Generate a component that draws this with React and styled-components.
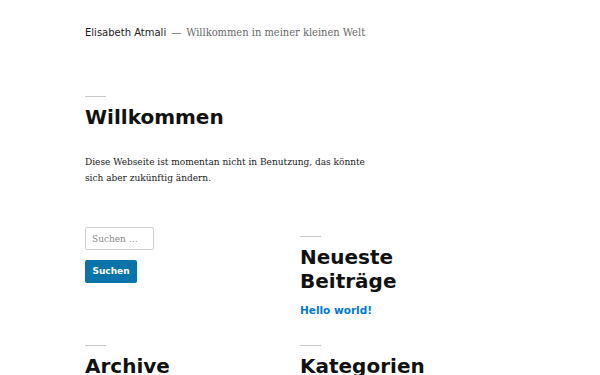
import React from "react";
import styled, { createGlobalStyle } from "styled-components";

const Global = createGlobalStyle`
  html, body { margin: 0; padding: 0; background: #fff; }
  body { font-family: "DejaVu Serif Condensed", "DejaVu Serif", serif; color: #1a1a1a; }
`;

const Page = styled.div`
  padding: 26px 0 0 85px;
  width: 600px;
  height: 375px;
  box-sizing: border-box;
  overflow: hidden;
`;

const Header = styled.header`
  display: flex;
  align-items: baseline;
  gap: 5px;
  height: 16px;
`;

const SiteTitle = styled.span`
  font-family: "DejaVu Sans", sans-serif;
  font-size: 10px;
  color: #1a1a1a;
`;

const Dash = styled.span`
  font-family: "DejaVu Sans", sans-serif;
  font-size: 10px;
  color: #686868;
`;

const Tagline = styled.span`
  font-size: 11px;
  color: #686868;
`;

const Rule = styled.div`
  width: 21px;
  height: 1px;
  background: #c8c8c8;
`;

const Article = styled.article`
  margin-top: 54px;
  width: 300px;
`;

const Title = styled.h1`
  font-family: "DejaVu Sans", sans-serif;
  font-weight: bold;
  font-size: 20px;
  line-height: 24px;
  margin: 8px 0 0;
  color: #111;
`;

const Text = styled.p`
  font-size: 10px;
  line-height: 16px;
  margin: 24.5px 0 0;
`;

const Widgets = styled.div`
  display: grid;
  grid-template-columns: 215px 215px;
  row-gap: 29px;
  margin-top: 41px;
`;

const Widget = styled.section`
  display: flex;
  flex-direction: column;
  align-items: flex-start;
  padding-top: ${(p) => (p.$offset ? `${p.$offset}px` : "0")};
`;

const WidgetTitle = styled.h2`
  font-family: "DejaVu Sans", sans-serif;
  font-weight: bold;
  font-size: 20px;
  line-height: 24px;
  margin: 8px 0 0;
  color: #111;
`;

const SearchInput = styled.input`
  width: 69px;
  height: 23px;
  box-sizing: border-box;
  border: 1px solid #d1d1d1;
  border-radius: 2px;
  padding: 0 6px;
  font-family: "DejaVu Serif Condensed", "DejaVu Serif", serif;
  font-size: 10px;
  color: #1a1a1a;
  &::placeholder { color: #8a8a8a; }
`;

const SearchButton = styled.button`
  margin-top: 10px;
  width: 52px;
  height: 23px;
  border: 0;
  border-radius: 2px;
  background: #0a74aa;
  color: #fff;
  font-family: "DejaVu Sans", sans-serif;
  font-weight: bold;
  font-size: 9px;
  padding: 0;
`;

const PostLink = styled.a`
  margin-top: 11px;
  font-family: "DejaVu Sans", sans-serif;
  font-weight: bold;
  font-size: 10.5px;
  color: #007acc;
  text-decoration: none;
`;

export default function App() {
  return (
    <>
      <Global />
      <Page>
        <Header>
          <SiteTitle>Elisabeth Atmali</SiteTitle>
          <Dash>—</Dash>
          <Tagline>Willkommen in meiner kleinen Welt</Tagline>
        </Header>
        <Article>
          <Rule />
          <Title>Willkommen</Title>
          <Text>
            Diese Webseite ist momentan nicht in Benutzung, das könnte sich aber zukünftig ändern.
          </Text>
        </Article>
        <Widgets>
          <Widget>
            <SearchInput placeholder="Suchen …" />
            <SearchButton>Suchen</SearchButton>
          </Widget>
          <Widget $offset={9}>
            <Rule />
            <WidgetTitle>Neueste<br />Beiträge</WidgetTitle>
            <PostLink href="#">Hello world!</PostLink>
          </Widget>
          <Widget>
            <Rule />
            <WidgetTitle>Archive</WidgetTitle>
          </Widget>
          <Widget>
            <Rule />
            <WidgetTitle>Kategorien</WidgetTitle>
          </Widget>
        </Widgets>
      </Page>
    </>
  );
}
